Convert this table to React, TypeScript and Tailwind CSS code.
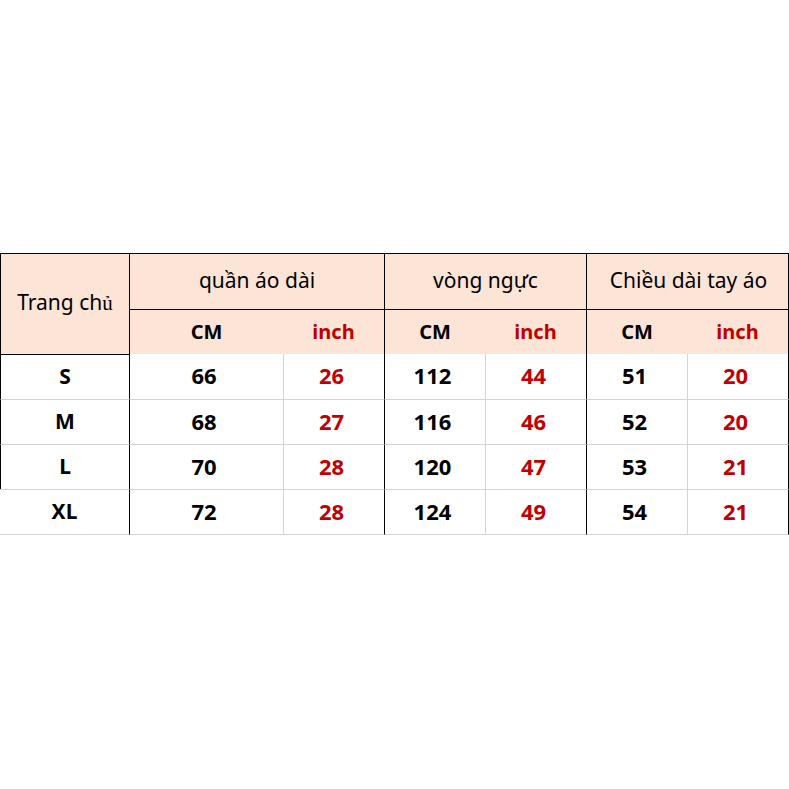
import React from "react";

const F = { fontFamily: "'Noto Sans', 'Open Sans', sans-serif" } as React.CSSProperties;

type Row = { size: string; v: number[] };
const rows: Row[] = [
  { size: "S", v: [66, 26, 112, 44, 51, 20] },
  { size: "M", v: [68, 27, 116, 46, 52, 20] },
  { size: "L", v: [70, 28, 120, 47, 53, 21] },
  { size: "XL", v: [72, 28, 124, 49, 54, 21] },
];

export default function App() {
  return (
    <div className="w-[789px] h-[789px] bg-white pt-[253px]" style={F}>
      <div className="grid grid-cols-[129px_154px_101px_101px_101px_101px_102px] grid-rows-[56px_45px_45px_45px_45px_46px] text-black">
        {/* header row 1 */}
        <div className="row-span-2 bg-[#fce4d6] border-t border-l border-black flex items-center justify-center text-[21px] pb-[1px]">
          <span>
            Trang ch<span style={{ fontFamily: "'Liberation Serif', serif" }}>ủ</span>
          </span>
        </div>
        <div className="col-span-2 bg-[#fce4d6] border-t border-l border-black flex items-center justify-center text-[21px] pb-[2px]">
          quần áo dài
        </div>
        <div className="col-span-2 bg-[#fce4d6] border-t border-l border-black flex items-center justify-center text-[21px] pb-[2px]">
          vòng ngực
        </div>
        <div className="col-span-2 bg-[#fce4d6] border-t border-l border-r border-black flex items-center justify-center text-[21px] pl-[2px] pb-[2px]">
          Chiều dài tay áo
        </div>
        {/* header row 2 */}
        {[0, 1, 2].map((i) => (
          <React.Fragment key={i}>
            <div className="bg-[#fce4d6] border-t border-l border-black flex items-center justify-center text-[20px] font-bold">
              CM
            </div>
            <div
              className={
                "bg-[#fce4d6] border-t border-black flex items-center justify-center text-[20px] font-bold text-[#c00000]" +
                (i === 2 ? " border-r" : "")
              }
            >
              inch
            </div>
          </React.Fragment>
        ))}
        {/* data rows */}
        {rows.map((r, ri) => (
          <React.Fragment key={r.size}>
            <div
              className={
                "flex items-center justify-center text-[21px] font-bold " +
                (ri === 0 ? "border-t border-t-black " : "border-t border-t-[#d4d4d4] ") +
                (ri === 3 ? "border-b border-b-[#d4d4d4] " : "border-l border-l-black ")
              }
            >
              {r.size}
            </div>
            {r.v.map((n, ci) => (
              <div
                key={ci}
                className={
                  "flex items-center justify-center pr-[5px] pb-[2px] text-[22px] font-bold border-l " +
                  (ci % 2 === 0 ? "border-l-black " : "border-l-[#d4d4d4] text-[#c00000] ") +
                  (ri === 0 ? "" : "border-t border-t-[#d4d4d4] ") +
                  (ri === 3 ? "border-b border-b-[#d4d4d4] " : "") +
                  (ci === 5 ? "border-r border-r-black " : "")
                }
              >
                {n}
              </div>
            ))}
          </React.Fragment>
        ))}
      </div>
    </div>
  );
}
